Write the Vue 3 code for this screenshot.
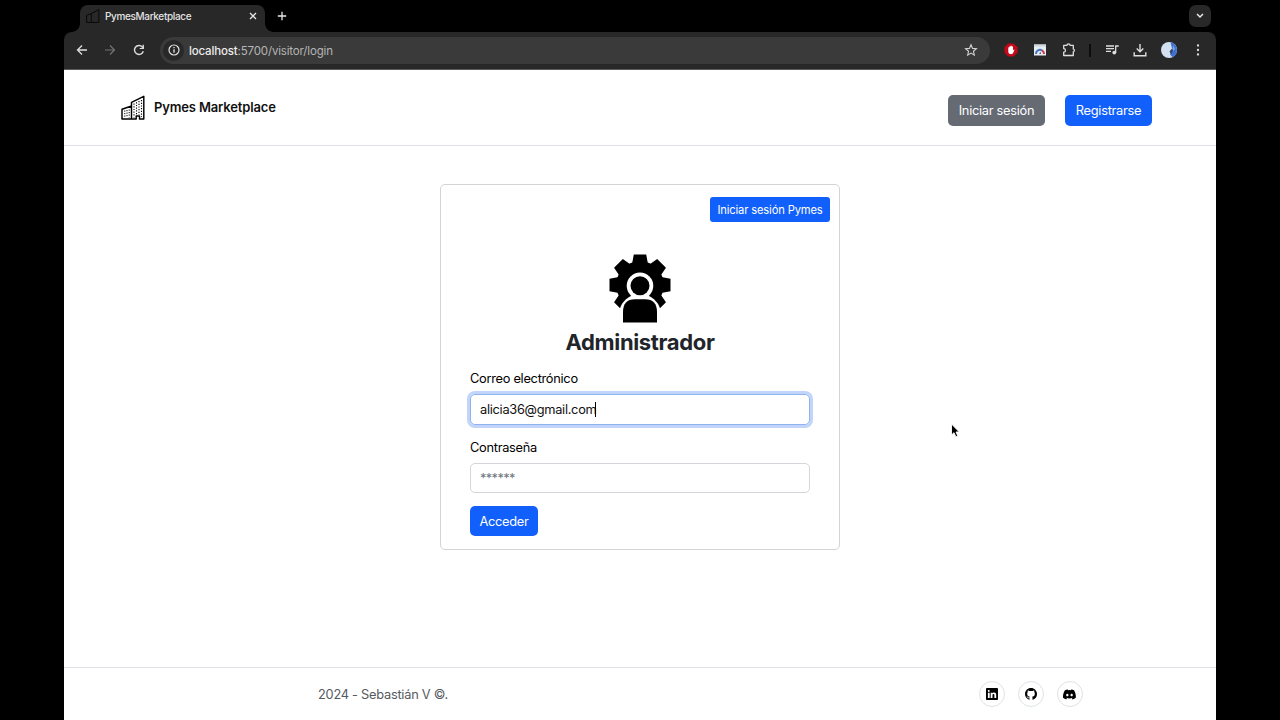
<template>
  <div class="screen">
    <div class="browser">
      <!-- tab strip -->
      <div class="tab-strip">
        <div class="tab">
          <svg class="tab-favicon" viewBox="0 0 24 24" width="14" height="14">
            <path d="M1 23V11l8-3v15M9 8l13-7v22H1" fill="none" stroke="#080808" stroke-width="1.7" />
          </svg>
          <span class="tab-title">PymesMarketplace</span>
          <svg class="tab-close" viewBox="0 0 8 8" width="8" height="8">
            <path d="M1 1l6 6M7 1l-6 6" stroke="#e8e8e8" stroke-width="1.3" />
          </svg>
        </div>
        <svg class="new-tab" viewBox="0 0 10 10" width="10" height="10">
          <path d="M5 .8v8.4M.8 5h8.4" stroke="#e8e8e8" stroke-width="1.3" />
        </svg>
        <div class="tab-search">
          <svg viewBox="0 0 8 6" width="8" height="6">
            <path d="M1 1l3 3 3-3" fill="none" stroke="#e8e8e8" stroke-width="1.5" />
          </svg>
        </div>
      </div>

      <!-- toolbar -->
      <div class="toolbar">
        <svg class="nav-icon" viewBox="0 0 12 12" width="12" height="12">
          <path d="M11 6H1.6M6 1.5L1.5 6 6 10.5" fill="none" stroke="#dedede" stroke-width="1.3" />
        </svg>
        <svg class="nav-icon" viewBox="0 0 12 12" width="12" height="12">
          <path d="M1 6h9.4M6 1.5L10.5 6 6 10.5" fill="none" stroke="#737373" stroke-width="1.2" />
        </svg>
        <svg class="nav-icon reload" viewBox="0 0 12 12" width="12" height="12">
          <path d="M10.3 7.3A4.5 4.5 0 1 1 9.3 2.9L10.5 4.2" fill="none" stroke="#dedede" stroke-width="1.4" />
          <path d="M10.9 .8v4.3H6.7V4h2.9V.8z" fill="#dedede" />
        </svg>
        <div class="address">
          <span class="site-info">
            <svg viewBox="0 0 12 12" width="12" height="12">
              <circle cx="6" cy="6" r="5" fill="none" stroke="#e3e3e3" stroke-width="1.2" />
              <path d="M6 5.3v3.5M6 3v1.3" stroke="#e3e3e3" stroke-width="1.3" />
            </svg>
          </span>
          <span class="url"><b>localhost</b>:5700/visitor/login</span>
          <svg class="star" viewBox="0 0 24 24" width="14" height="14">
            <path d="M12 3l2.6 6.2 6.7.6-5.1 4.4 1.5 6.6L12 17.3l-5.7 3.5 1.5-6.6-5.1-4.4 6.7-.6z" fill="none" stroke="#d0d0d0" stroke-width="1.9" />
          </svg>
        </div>
        <div class="extensions">
          <svg viewBox="0 0 14 14" width="14" height="14">
            <path d="M4.3.5h5.4l3.8 3.8v5.4l-3.8 3.8H4.3L.5 9.7V4.3z" fill="#c4081a" />
            <path d="M4.3 7.2V4.6q.6-.8 1.1 0V3.500q.7-.8 1.2 0V3q.7-.8 1.2 0v.7q.7-.7 1.2.1v3.400q1-1.2 1.500-.5L9 10.2q-.8 1-2 1-2.300 0-2.700-2z" fill="#fff" />
          </svg>
          <svg viewBox="0 0 14 14" width="14" height="14">
            <path d="M1 1.500h12v11H1z" fill="#e8edf2" />
            <path d="M1 1.500h12v2H1z" fill="#d1d5da" />
            <path d="M3 11a4 4 0 0 1 6-3.600" fill="none" stroke="#4077c8" stroke-width="2" />
            <path d="M9 7.400A4 4 0 0 1 11 11" fill="none" stroke="#cf3543" stroke-width="2" />
            <path d="M6.300 11l1-2.500.8 2.500z" fill="#45566b" />
          </svg>
          <svg viewBox="0 0 14 14" width="14" height="14">
            <path d="M1.700 2.300h3.300a1.500 1.500 0 0 1 3 0h3.300v3.600a1.500 1.500 0 0 1 0 2.900v3.700H1.700V9.200a1.800 1.800 0 0 0 0-3.600z" fill="none" stroke="#dedede" stroke-width="1.3" stroke-linejoin="round" />
          </svg>
        </div>
        <span class="divider"></span>
        <div class="tools">
          <svg viewBox="0 0 14 14" width="14" height="14">
            <path d="M1 3h8M1 5.700h8M1 8.400h5M10.700 9.500V3h3" fill="none" stroke="#dedede" stroke-width="1.3" />
            <circle cx="9.3" cy="9.6" r="1.9" fill="#dedede" />
          </svg>
          <svg viewBox="0 0 14 14" width="14" height="14">
            <path d="M7 1v7.500M3.700 5.500L7 8.800l3.300-3.300M1.200 9.300v3.400h11.600V9.300" fill="none" stroke="#dedede" stroke-width="1.4" />
          </svg>
          <svg viewBox="0 0 16 16" width="16" height="16">
            <circle cx="8" cy="8" r="8" fill="#d3e0f1" />
            <path d="M9.500.2a8 8 0 0 1 2 15L9 12.500l3-4-1.500-4z" fill="#3f72cf" />
            <path d="M8.500 9.500l2.500-3 1.300 2-2.300 4z" fill="#32476e" />
            <path d="M12 3l2 4-2 2z" fill="#7da6ee" />
          </svg>
          <svg viewBox="0 0 14 14" width="14" height="14" fill="#dedede">
            <circle cx="7" cy="2.5" r="1.15" />
            <circle cx="7" cy="7" r="1.15" />
            <circle cx="7" cy="11.5" r="1.15" />
          </svg>
        </div>
      </div>

      <!-- page -->
      <div class="page">
        <header class="navbar">
          <div class="brand">
            <svg viewBox="0 0 24 26" width="24" height="26">
              <path d="M1 24V14.300L10.500 11v13zM10.500 24V7.300L22.800 1.300v22.700h-4.300v-3h-3.300v3z" fill="none" stroke="#000" stroke-width="1.45" stroke-linejoin="round" />
              <path d="M3.800 15.500v7M6 15v7.500M8.200 14.500v8" stroke="#000" stroke-width="1" stroke-dasharray="1.2 1.3" />
              <path d="M13 8.500v14M15.500 7.200v13M18 6v14M20.500 5v17" stroke="#000" stroke-width="1.1" stroke-dasharray="1.2 1.5" />
            </svg>
            <span class="brand-name">Pymes Marketplace</span>
          </div>
          <div class="nav-actions">
            <button class="btn btn-secondary"><span>Iniciar sesión</span></button>
            <button class="btn btn-primary"><span>Registrarse</span></button>
          </div>
        </header>

        <main class="content">
          <section class="card">
            <button class="btn btn-primary btn-sm"><span>Iniciar sesión Pymes</span></button>
            <svg class="admin-icon" viewBox="-31 -31 62 69" width="62" height="69">
              <circle r="23.8" />
              <path v-for="angle in toothAngles" :key="angle" :transform="`rotate(${angle})`" d="M-6.200-30.500H6.200L7.700-22.500 9-20H-9L-7.700-22.500z" />
              <path d="M-20 38V23.500C-18.500 18-14 13.500-9 11H9C14 13.500 18.500 18 20 23.500V38z" fill="#fff" />
              <circle cy=".8" r="13.3" fill="#fff" />
              <circle cy=".8" r="9.5" />
              <path d="M-17 37.500V27Q-17 14.300-5 14.300H5Q17 14.300 17 27V37.500z" />
            </svg>
            <h1 class="title">Administrador</h1>
            <form class="form" @submit.prevent>
              <label class="label">Correo electrónico</label>
              <div class="input focused"><span>{{ email }}</span><i class="caret"></i></div>
              <label class="label second">Contraseña</label>
              <div class="input placeholder"><span>******</span></div>
              <button class="btn btn-primary submit"><span>Acceder</span></button>
            </form>
          </section>
        </main>

        <footer class="footer">
          <span class="copyright">2024 - Sebastián V ©.</span>
          <div class="socials">
            <a v-for="s in socials" :key="s.name" class="social">
              <svg :viewBox="s.box" :width="s.size" :height="s.size"><path :d="s.path" /></svg>
            </a>
          </div>
        </footer>
      </div>
    </div>

    <svg class="cursor" viewBox="0 0 12 16" width="12" height="16">
      <path d="M1.500 1v11l2.500-2.300 1.800 4 2-.8L6 9h3.300z" fill="#000" stroke="#fff" stroke-width=".9" />
    </svg>
  </div>
</template>

<script setup>
import { ref } from 'vue'

const email = ref('alicia36@gmail.com')

// el diente inferior queda detrás de la persona
const toothAngles = [0, 45, 90, 135, 225, 270, 315]

const socials = [
  {
    name: 'linkedin',
    box: '0 0 16 16',
    size: 12,
    path: 'M0 1.146C0 .513.526 0 1.175 0h13.650C15.474 0 16 .513 16 1.146v13.708c0 .633-.526 1.146-1.175 1.146H1.175C.526 16 0 15.487 0 14.854zm4.943 12.248V6.169H2.542v7.225zm-1.200-8.212c.837 0 1.358-.554 1.358-1.248-.015-.709-.52-1.248-1.342-1.248S2.400 3.226 2.400 3.934c0 .694.521 1.248 1.327 1.248zm4.908 8.212V9.359c0-.216.016-.432.080-.586.173-.431.568-.878 1.232-.878.869 0 1.216.662 1.216 1.634v3.865h2.401V9.250c0-2.220-1.184-3.252-2.764-3.252-1.274 0-1.845.7-2.165 1.193v.025h-.016l.016-.025V6.169h-2.400c.03.678 0 7.225 0 7.225z'
  },
  {
    name: 'github',
    box: '0 0 16 16',
    size: 12,
    path: 'M8 0C3.580 0 0 3.580 0 8c0 3.540 2.290 6.530 5.470 7.590.4.070.55-.17.55-.38 0-.19-.01-.82-.01-1.490-2.010.37-2.530-.49-2.690-.94-.09-.23-.48-.94-.82-1.130-.28-.15-.68-.52-.01-.53.63-.01 1.080.58 1.230.82.72 1.210 1.870.87 2.330.66.07-.52.28-.87.51-1.070-1.780-.2-3.640-.89-3.640-3.950 0-.87.31-1.590.82-2.150-.08-.2-.36-1.020.08-2.120 0 0 .67-.21 2.200.82.64-.18 1.320-.27 2-.27s1.360.09 2 .27c1.530-1.040 2.200-.82 2.200-.82.44 1.100.16 1.920.08 2.120.51.56.82 1.270.82 2.150 0 3.070-1.870 3.750-3.650 3.950.29.25.54.73.54 1.480 0 1.070-.01 1.930-.01 2.200 0 .21.15.46.55.38A8.010 8.010 0 0 0 16 8c0-4.420-3.580-8-8-8'
  },
  {
    name: 'discord',
    box: '0 0 16 16',
    size: 13,
    path: 'M13.545 2.907a13.200 13.200 0 0 0-3.257-1.011.05.05 0 0 0-.052.025c-.141.25-.297.577-.406.833a12.200 12.200 0 0 0-3.658 0 8 8 0 0 0-.412-.833.05.05 0 0 0-.052-.025c-1.125.194-2.220.534-3.257 1.011C.356 6.024-.213 9.047.066 12.032a13.300 13.300 0 0 0 3.995 2.020c.308-.42.582-.863.818-1.329a8.700 8.700 0 0 1-1.248-.595l.248-.195c2.619 1.196 5.454 1.196 8.041 0l.248.195a8.300 8.300 0 0 1-1.249.594c.24.465.515.909.817 1.329a13.200 13.200 0 0 0 4.001-2.020c.328-3.451-.559-6.449-2.192-9.124zM5.347 10.200c-.789 0-1.438-.724-1.438-1.612s.637-1.613 1.438-1.613c.807 0 1.450.73 1.438 1.613 0 .888-.637 1.612-1.438 1.612m5.316 0c-.788 0-1.438-.724-1.438-1.612s.637-1.613 1.438-1.613c.807 0 1.451.73 1.438 1.613 0 .888-.631 1.612-1.438 1.612'
  }
]
</script>

<style>
body {
  background: #000;
}
</style>

<style scoped>
.screen {
  position: relative;
  display: flex;
  justify-content: center;
  width: 1280px;
  height: 720px;
  overflow: hidden;
  background: #000;
  font-family: Inter, "Liberation Sans", sans-serif;
  letter-spacing: -0.28px;
}

.screen *,
.screen {
  box-sizing: border-box;
}

svg {
  display: block;
  flex: none;
}

.browser {
  display: flex;
  flex-direction: column;
  width: 1152px;
}

.tab-strip {
  display: flex;
  align-items: flex-end;
  height: 32px;
  padding: 0 5px 0 16px;
}

.tab {
  position: relative;
  display: flex;
  align-items: center;
  width: 185px;
  height: 27px;
  padding: 0 8px 5px 6px;
  border-radius: 8px 8px 0 0;
  background: #282828;
}

/* inverted corners at the foot of the active tab */
.tab::before,
.tab::after {
  content: "";
  position: absolute;
  bottom: 0;
  width: 8px;
  height: 8px;
}

.tab::before {
  left: -8px;
  background: radial-gradient(circle at 0 0, transparent 7.5px, #282828 8px);
}

.tab::after {
  right: -8px;
  background: radial-gradient(circle at 100% 0, transparent 7.5px, #282828 8px);
}

.tab-title {
  flex: 1;
  margin-left: 5px;
  color: #e3e3e3;
  font-size: 10px;
  font-weight: 500;
  letter-spacing: -0.35px;
}

.new-tab {
  margin: 0 auto 11px 12px;
}

.tab-search {
  display: flex;
  align-items: center;
  justify-content: center;
  width: 22px;
  height: 22px;
  margin-bottom: 5px;
  border-radius: 7px;
  background: #282828;
}

.toolbar {
  display: flex;
  align-items: center;
  height: 38px;
  padding: 0 10px 1px 12px;
  border-bottom: 1px solid #5b5b5b;
  border-radius: 8px 8px 0 0;
  background: #282828;
}

.nav-icon {
  margin-right: 17px;
}

.nav-icon + .nav-icon {
  margin-left: -1px;
}

.nav-icon + .reload {
  margin-left: 0;
}

.address {
  display: flex;
  align-items: center;
  width: 830px;
  height: 27px;
  margin-left: -2px;
  padding: 0 12px 0 3px;
  border-radius: 14px;
  background: #3a3a3a;
}

.site-info {
  display: flex;
  align-items: center;
  justify-content: center;
  width: 21px;
  height: 21px;
  border-radius: 50%;
  background: #282828;
}

.url {
  flex: 1;
  margin-left: 5px;
  padding-top: 1px;
  color: #b5b5b5;
  font-size: 11.5px;
  letter-spacing: -0.16px;
}

.url b {
  color: #ededed;
  font-weight: 500;
}

.extensions {
  display: flex;
  gap: 15px;
  margin-left: 14px;
}

.divider {
  width: 2px;
  height: 13px;
  margin: 0 14px 0 13px;
  background: #0c0c0c;
}

.tools {
  display: flex;
  align-items: center;
  gap: 14px;
}

.page {
  display: flex;
  flex: 1;
  flex-direction: column;
  background: #fff;
}

.navbar {
  display: flex;
  justify-content: space-between;
  height: 76px;
  padding: 25px 64px 0 57px;
  border-bottom: 1px solid #dee2e6;
}

.brand {
  display: flex;
  height: 26px;
  align-items: center;
  gap: 9px;
}

.brand-name {
  margin-top: -2px;
  color: #111;
  font-size: 13px;
  font-weight: 600;
  letter-spacing: -0.15px;
  line-height: 16px;
}

.nav-actions {
  display: flex;
  gap: 20px;
}

.btn {
  display: flex;
  align-items: center;
  justify-content: center;
  height: 31px;
  padding: 0;
  border: 0;
  border-radius: 5px;
  color: #fff;
  font-family: inherit;
  font-size: 12.8px;
  letter-spacing: -0.27px;
  white-space: nowrap;
}

.btn-primary {
  width: 87px;
  background: #1260fb;
}

.btn-secondary {
  width: 97px;
  background: #656a73;
}

.content {
  display: flex;
  flex: 1;
  justify-content: center;
  align-items: flex-start;
  padding-top: 38px;
}

.card {
  display: flex;
  flex-direction: column;
  width: 400px;
  height: 366px;
  padding: 12px 10px 0;
  border: 1px solid #d2d4d7;
  border-radius: 5px;
}

.btn-sm {
  align-self: flex-end;
  width: 120px;
  height: 25px;
  margin-right: -1px;
  border-radius: 3px;
  font-size: 11.2px;
  letter-spacing: -0.15px;
}

.admin-icon {
  align-self: center;
  margin-top: 32px;
}

.title {
  margin: 6px 0 0;
  color: #212529;
  font-size: 22px;
  font-weight: 700;
  letter-spacing: -0.35px;
  line-height: 27px;
  text-align: center;
}

.form {
  display: flex;
  flex-direction: column;
  margin: 13px 19px 0;
}

.label {
  height: 20px;
  margin-bottom: 5px;
  color: #000;
  font-size: 12.8px;
  line-height: 20px;
}

.label.second {
  margin-top: 13px;
}

.input {
  display: flex;
  align-items: center;
  height: 31px;
  padding: 0 10px 1px 9px;
  border: 1px solid #d2d6da;
  border-radius: 5px;
  color: #111;
  font-size: 12.8px;
}

.input.focused {
  border-color: #8fb2f0;
  box-shadow: 0 0 0 3px #c1d5fb;
}

.input.placeholder {
  height: 30px;
  padding-bottom: 0;
  color: #6c757d;
  letter-spacing: -0.6px;
}

.caret {
  width: 1px;
  height: 15px;
  margin-left: -1px;
  background: #000;
}

.submit {
  width: 68px;
  height: 30px;
  margin-top: 13px;
}

.footer {
  display: flex;
  align-items: center;
  justify-content: space-between;
  height: 53px;
  padding: 0 133.5px 0 254px;
  border-top: 1px solid #dee2e6;
}

.copyright {
  color: #555a60;
  font-size: 12.8px;
  letter-spacing: -0.25px;
}

.socials {
  display: flex;
  gap: 13px;
}

.social {
  display: flex;
  align-items: center;
  justify-content: center;
  width: 26px;
  height: 26px;
  border: 1px solid #dee2e6;
  border-radius: 50%;
}

.cursor {
  position: absolute;
  left: 950px;
  top: 423px;
}
</style>
